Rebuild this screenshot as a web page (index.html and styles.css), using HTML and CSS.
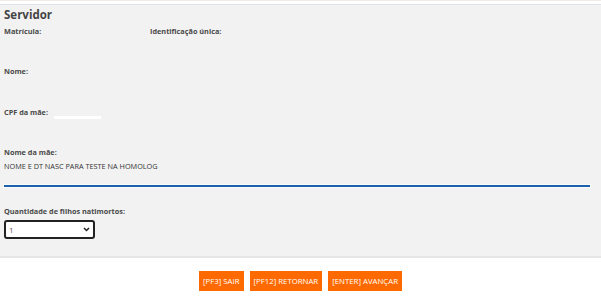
FILE: index.html
```html
<!DOCTYPE html>
<html lang="pt-BR">
<head>
    <meta charset="UTF-8">
    <meta name="viewport" content="width=device-width, initial-scale=1.0">
    <title>Servidor</title>
    <link rel="stylesheet" href="styles.css">
</head>
<body>
    <div class="topbar"></div>
    <section class="panel">
        <h2 class="title">Servidor</h2>
        <div class="grid">
            <div class="field">
                <span class="label">Matrícula:</span>
            </div>
            <div class="field">
                <span class="label">Identificação única:</span>
            </div>
        </div>
        <div class="field field-nome">
            <span class="label">Nome:</span>
        </div>
        <div class="field">
            <span class="label">CPF da mãe:</span><span class="blank"></span>
        </div>
        <div class="field field-mae">
            <span class="label">Nome da mãe:</span>
            <div class="value">NOME E DT NASC PARA TESTE NA HOMOLOG</div>
            <div class="underline"></div>
        </div>
        <div class="field-select">
            <span class="label">Quantidade de filhos natimortos:</span>
            <div class="select">
                <span>1</span>
                <svg width="7" height="5" viewBox="0 0 7 5"><path d="M1 1 L3.5 3.5 L6 1" fill="none" stroke="#222" stroke-width="1.5"/></svg>
            </div>
        </div>
    </section>
    <div class="actions">
        <button class="btn">[PF3] SAIR</button>
        <button class="btn">[PF12] RETORNAR</button>
        <button class="btn">[ENTER] AVANÇAR</button>
    </div>
</body>
</html>
```

FILE: styles.css
```css
* {
    margin: 0;
    padding: 0;
    box-sizing: border-box;
}

body {
    font-family: "Open Sans", "Liberation Sans", sans-serif;
    font-size: 7.5px;
    line-height: 11px;
    background-color: #fff;
    color: #444;
}

.topbar {
    height: 4px;
    border-top: 1px solid #f1ebe4;
}

.panel {
    background-color: #f2f2f2;
    border-top: 1px solid #dde2e8;
    border-bottom: 2px solid #e6e6e6;
    padding: 3px 4px 0 4px;
    height: 254px;
}

.title {
    font-size: 11.5px;
    font-weight: 700;
    line-height: 14px;
    color: #444;
    height: 18px;
}

.grid {
    display: grid;
    grid-template-columns: 146px 1fr;
}

.field {
    height: 40px;
}

.field-nome {
    height: 41px;
}

.label {
    display: inline-block;
    font-size: 7.3px;
    font-weight: 700;
    line-height: 11px;
    color: #4a4a4a;
}

.blank {
    display: inline-block;
    width: 47px;
    height: 3px;
    margin-left: 6px;
    background-color: #fff;
    vertical-align: -4px;
}

.field-mae {
    height: 59px;
}

.value {
    font-size: 7.3px;
    line-height: 11px;
    color: #333;
    margin-top: 3px;
}

.underline {
    width: 586px;
    height: 2px;
    margin-top: 13px;
    background-color: #1a62ad;
    box-shadow: 0 0 0 1px #fbfbfb;
}

.select {
    display: flex;
    align-items: center;
    justify-content: space-between;
    width: 91px;
    height: 19px;
    margin-top: 3px;
    padding: 0 3px 0 3px;
    background-color: #fff;
    border: 2px solid #222;
    border-radius: 3px;
    font-size: 8px;
    color: #555;
}

.actions {
    display: flex;
    justify-content: center;
    gap: 6px;
    padding-top: 13px;
}

.btn {
    height: 20px;
    padding: 0 4px;
    border: none;
    background-color: #ff6a00;
    color: #fff;
    font-family: "Open Sans", "Liberation Sans", sans-serif;
    font-size: 7.8px;
}
```
